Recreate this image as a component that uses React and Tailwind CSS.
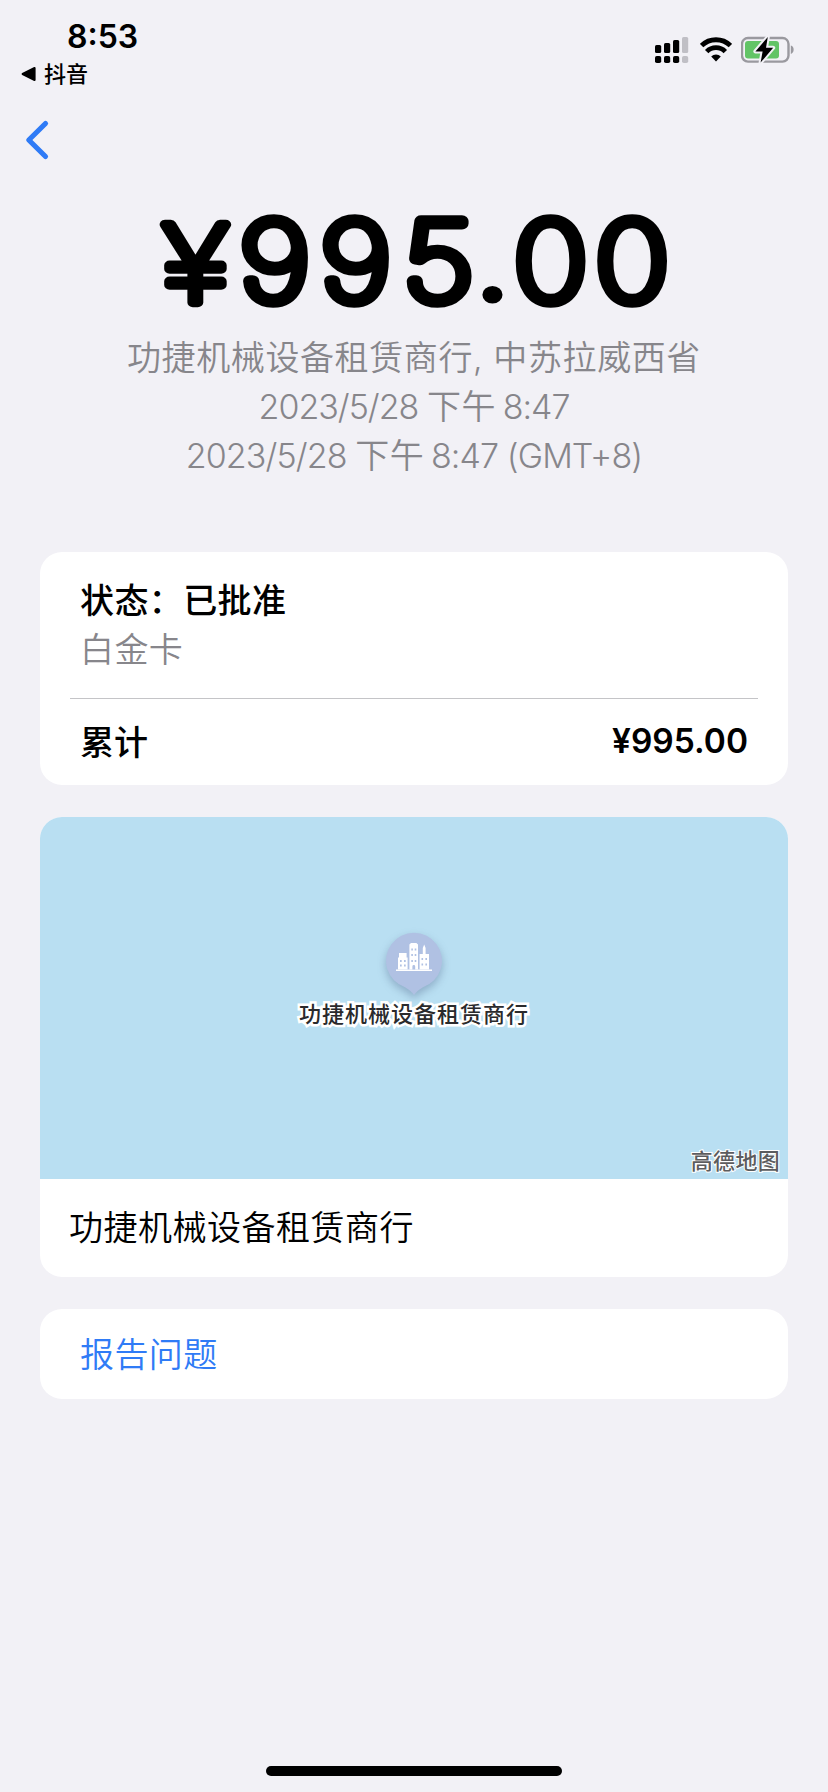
const inter = "font-['Inter','Noto_Sans_CJK_SC',sans-serif]";

function SignalIcon() {
  return (
    <svg width="34" height="28" viewBox="0 0 34 28">
      <rect x="0" y="9" width="6.2" height="8" rx="1.6" />
      <rect x="9" y="7" width="6.2" height="10" rx="1.6" />
      <rect x="18" y="4" width="6.2" height="13" rx="1.6" />
      <rect x="27" y="1" width="6.2" height="16" rx="1.6" fill="#c0bfc5" />
      <rect x="0" y="20" width="6.2" height="7" rx="1.8" />
      <rect x="9" y="20" width="6.2" height="7" rx="1.8" />
      <rect x="18" y="20" width="6.2" height="7" rx="1.8" />
      <rect x="27" y="20" width="6.2" height="7" rx="1.8" fill="#c0bfc5" />
    </svg>
  );
}

function WifiIcon() {
  return (
    <svg width="32" height="28" viewBox="0 0 32 28" fill="none" stroke="#000" strokeWidth="4.8">
      <path d="M1.6 9.6A20.6 20.6 0 0 1 30.4 9.6" />
      <path d="M6.7 15.6A13 13 0 0 1 25.3 15.6" />
      <path d="M16 25.4L11.2 20.6A6.6 6.6 0 0 1 20.8 20.6Z" fill="#000" stroke="none" />
    </svg>
  );
}

function BatteryIcon() {
  return (
    <svg width="54" height="30" viewBox="0 0 54 30">
      <rect x="1" y="3" width="46.5" height="23.6" rx="6" fill="none" stroke="#9a999f" strokeWidth="2.4" />
      <path d="M49.8 10.6C53.6 11.6 53.6 18 49.8 19Z" fill="#9a999f" />
      <rect x="4" y="6" width="34" height="17.6" rx="3" fill="#62c466" />
      <path
        d="M26.8 2L14.4 16.4H21.6L19.6 27.6L32.2 12.8H25Z"
        fill="#000"
        stroke="#f2f1f6"
        strokeWidth="4"
        strokeLinejoin="round"
        paintOrder="stroke"
      />
    </svg>
  );
}

function StatusBar() {
  return (
    <header className="flex h-[104px] items-start justify-between">
      <div className="flex flex-col pl-5">
        <div className="pl-[47px] pt-[17px] text-[32px] leading-[39px] font-semibold">8:53</div>
        <div className="flex items-center gap-[8px] pt-[1px] text-[22px] leading-[34px] font-medium">
          <svg width="16" height="16" viewBox="0 0 16 16">
            <path d="M2.6 8L14.6 2V14Z" stroke="#000" strokeWidth="2" strokeLinejoin="round" />
          </svg>
          抖音
        </div>
      </div>
      <div className="flex items-center pt-[35px] pr-[33px]">
        <SignalIcon />
        <div className="w-[11px]" />
        <WifiIcon />
        <div className="w-[9px]" />
        <BatteryIcon />
      </div>
    </header>
  );
}

function Amount() {
  return (
    <svg width="828" height="120" viewBox="0 200 828 120" className="overflow-visible">
      <g stroke="#000" strokeWidth="11.6" strokeLinejoin="round" strokeLinecap="round">
        <text
          y="300.6"
          x="142 207.8 278.2 350.2 412.4 446.2 517.2"
          transform="scale(1.15 1)"
          fontSize="110"
          fontWeight="100"
        >
          <tspan className="font-['Roboto']" strokeWidth="9.5" fontWeight="200" dy="1">¥</tspan>
          <tspan dy="-1">995</tspan>
          <tspan fontWeight="400" strokeWidth="3">.</tspan>00
        </text>
      </g>
    </svg>
  );
}

function Pin() {
  return (
    <svg width="80" height="80" viewBox="0 0 80 80" className="drop-shadow-[0_4px_4px_rgba(60,80,120,0.35)]">
      <path
        d="M40 71C38 68 35.500 66 31 63.200A28 28 0 1 1 49 63.200C44.500 66 42 68 40 71Z"
        fill="#b0c1e3"
      />
      <g fill="#fff">
        <path d="M22 45.500h36v1.600h-36z" />
        <path d="M25 29h7.600v4.400h1v12.100h-9.600v-12.100h1z" />
        <path d="M35.400 20.500l1.600-1.500h5.400l1.600 1.500v25h-8.600z" />
        <path d="M50.200 20.500l1.400 3.500v6h3.400v15.500h-9.400v-15.500h3.200v-6z" />
      </g>
      <g fill="#b0c1e3">
        <path d="M26 36h1.700v2h-1.700zM30 36h1.700v2h-1.700zM26 40.500h1.700v2h-1.700zM30 40.500h1.700v2h-1.700z" />
        <path d="M37.300 24.500h1.600v2h-1.600zM40.700 24.500h1.600v2h-1.600zM37.300 30h1.600v2h-1.600zM40.700 30h1.600v2h-1.600zM37.300 36h1.600v2h-1.600zM40.700 36h1.600v2h-1.600zM38.400 42.500a1.400 1.400 0 0 1 2.800 0v3h-2.800z" />
        <path d="M47.500 34h1.600v2h-1.600zM51.400 34h1.600v2h-1.600zM47.500 39.500h1.600v2h-1.600zM51.400 39.500h1.600v2h-1.600z" />
      </g>
    </svg>
  );
}

export default function App() {
  return (
    <div className={`${inter} flex h-[1792px] w-[828px] flex-col bg-[#f2f1f6] text-black`}>
      <StatusBar />

      <nav className="flex h-[96px] pt-[15px] pl-[24px]">
        <svg width="28" height="42" viewBox="0 0 28 42" fill="none">
          <path d="M21.500 4.500L4.800 21L21.500 37.500" stroke="#2f7bf6" strokeWidth="5.200" strokeLinecap="round" strokeLinejoin="round" />
        </svg>
      </nav>

      <Amount />

      <div className="flex h-[232px] flex-col items-center pt-[13px] text-[34px] leading-[49px] font-[350] whitespace-pre text-[#87868b]">
        <div className="h-[49px] tracking-[0.6px]">功捷机械设备租赁商行, 中苏拉威西省</div>
        <div className="h-[49px] tracking-[-1px]">2023/5/28 <span className="tracking-[0.6px]">下午</span><span className="tracking-[-3px]"> </span>8:47</div>
        <div className="h-[49px] tracking-[-0.9px]">2023/5/28 <span className="tracking-[0.6px]">下午</span><span className="tracking-[-3px]"> </span>8:47 (GMT+8)</div>
      </div>

      <main className="flex flex-col gap-8 px-10">
        <section className="h-[233px] rounded-[22px] bg-white px-[30px] text-[34px]">
          <div className="flex h-[147px] flex-col border-b border-[#c4c4c7] pt-[24px] pl-[10px] leading-[49px]">
            <div className="h-[49px] font-medium tracking-[0.4px]">状态：已批准</div>
            <div className="h-[49px] font-[350] tracking-[0.4px] text-[#87868b]">白金卡</div>
          </div>
          <div className="flex h-[86px] items-center justify-between pr-[10px] pl-[10px] leading-[49px]">
            <span className="pt-[1px] font-medium">累计</span>
            <span className="pb-[1px] text-[33.5px] font-semibold">¥995.00</span>
          </div>
        </section>

        <section className="h-[460px] overflow-hidden rounded-[22px] bg-white">
          <div className="relative flex h-[362px] flex-col items-center bg-[#b9dff2]">
            <div className="mt-[107px] h-[73px]">
              <Pin />
            </div>
            <div className="text-[22px] leading-[34px] font-medium tracking-[1px] text-[#2a2a2c] [paint-order:stroke_fill] [-webkit-text-stroke:5px_#fff]">
              功捷机械设备租赁商行
            </div>
            <div className="absolute right-[8px] bottom-[2px] text-[22px] leading-[32px] font-medium tracking-[0.3px] text-[#5c5c5e] [paint-order:stroke_fill] [-webkit-text-stroke:2px_#fff]">
              高德地图
            </div>
          </div>
          <div className="flex h-[96px] items-center pl-[29px] text-[34px] font-[350] tracking-[0.5px]">功捷机械设备租赁商行</div>
        </section>

        <section className="flex h-[90px] items-center rounded-[22px] bg-white pl-[40px] text-[34px] font-[350] tracking-[0.4px] text-[#2f7bf6]">
          报告问题
        </section>
      </main>

      <div className="mt-auto mb-4 h-[10px] w-[296px] self-center rounded-full bg-black" />
    </div>
  );
}
